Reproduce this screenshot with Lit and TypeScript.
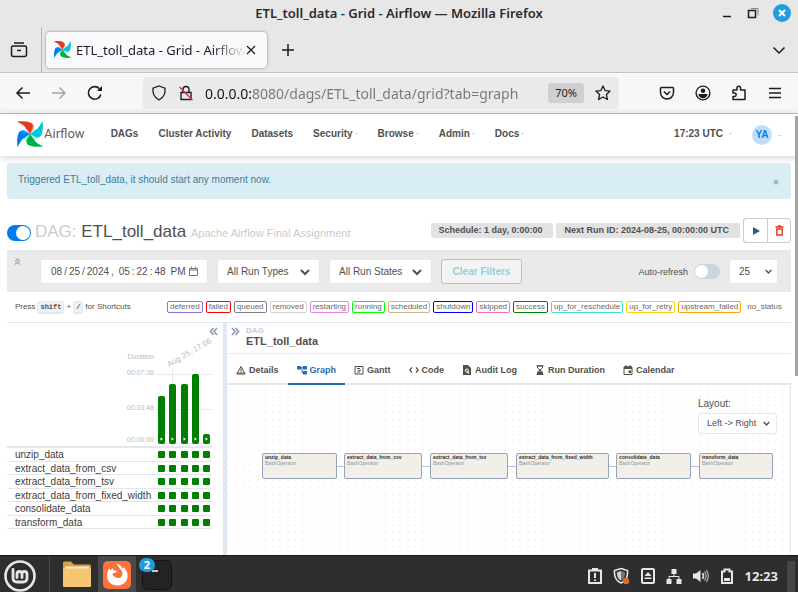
import { LitElement, html, css, svg, nothing } from "lit";
import { customElement } from "lit/decorators.js";

const base = css`
  * { box-sizing: border-box; }
  button { font: inherit; color: inherit; background: none; border: 0; padding: 0; margin: 0; display: flex; align-items: center; justify-content: center; }
  a { color: inherit; text-decoration: none; }
  svg { display: block; flex: none; fill: none; stroke: currentColor; }
  svg.solid { fill: currentColor; stroke: none; }
  input, select { font: inherit; color: inherit; margin: 0; }
`;

const blades: [number, string, string][] = [[0, "#e43921", "#ff7557"], [90, "#00c7d4", "#11e1ee"], [180, "#00ad46", "#04d659"], [270, "#017cee", "#0cb6ff"]];
const pinwheel = (size: number) => html`<svg class="solid" width=${size} height=${size} viewBox="0 0 26 26" aria-hidden="true">
  ${blades.map(([a, dark, light]) => svg`<g transform="rotate(${a} 13 13)">
    <path fill=${light} d="M13 13L8 7l6-5.500c3 1.800 3.500 4.500 2.500 6.500z" />
    <path fill=${dark} d="M.3.500C6-.3 12 .2 14.500 2.200c1.800 1.600 1 4-1.500 10.800C10.500 7 6 3.500.6 1z" />
  </g>`)}
</svg>`;

const chevron = (size = 10) => html`<svg width=${size} height=${size} viewBox="0 0 10 10" stroke-width="2" aria-hidden="true"><path d="M1 3l4 4 4-4" /></svg>`;

@customElement("browser-chrome")
class BrowserChrome extends LitElement {
  static styles = [base, css`
    :host { display: block; flex: none; font: 14px/20px "Noto Sans", sans-serif; color: #1c1b22; background: #e7e7e7; }
    .title { display: grid; grid-template-columns: 1fr auto 1fr; align-items: center; height: 25px; }
    .title h1 { grid-column: 2; margin: 0; font-size: 13px; font-weight: 600; color: #2b2b2b; }
    .wm { display: flex; justify-content: flex-end; align-items: center; gap: 14px; padding-right: 7px; }
    .close { width: 18px; height: 18px; border-radius: 50%; background: #1f9ede; color: #fff; }
    .tabs { display: flex; align-items: center; height: 48px; padding-top: 2px; border-bottom: 1px solid #c4c4c4; }
    .view { width: 42px; height: 44px; border-right: 1px solid #b4b4b4; padding-right: 3px; }
    .tab { display: flex; align-items: center; width: 221px; height: 36px; margin-left: 4px; padding: 0 11px 0 8px; background: #f9f9fb; border-radius: 4px; box-shadow: 0 0 3px rgba(0, 0, 0, .4); font-size: 13px; }
    .name { flex: 1; margin-left: 5px; overflow: hidden; white-space: nowrap; -webkit-mask-image: linear-gradient(90deg, #000 80%, transparent); mask-image: linear-gradient(90deg, #000 80%, transparent); }
    .plus { margin-left: 14px; }
    .all { margin-left: auto; padding-right: 12px; }
    .bar { display: flex; align-items: center; height: 41px; padding: 0 15px; background: #f7f7f8; border-bottom: 1px solid #c4c4c4; }
    .nav { display: flex; gap: 20px; padding-right: 40px; }
    .url { flex: 1; display: flex; align-items: center; gap: 11px; min-width: 0; height: 32px; padding: 0 8px; border-radius: 4px; background: #eaeaea; }
    .url input { flex: 1; min-width: 0; border: 0; padding: 0; outline: 0; height: 24px; color: transparent; background: linear-gradient(90deg, #15141a 46px, #77767c 46px); -webkit-background-clip: text; background-clip: text; }
    .zoom { width: 36px; height: 20px; border-radius: 3px; background: #d0d0d2; font-size: 11px; }
    .tools { display: flex; gap: 20px; padding-left: 40px; }
    .dim { color: #a5a5a9; }
  `];
  render() {
    return html`
      <div class="title">
        <h1>ETL_toll_data - Grid - Airflow — Mozilla Firefox</h1>
        <div class="wm">
          <button aria-label="Minimize"><svg width="12" height="12" stroke-width="1.500"><path d="M2 9.500h8" /></svg></button>
          <button aria-label="Restore"><svg width="12" height="12"><path d="M1.500 3.500h7v7h-7z" stroke-width="1.500" /><path d="M4 1.500h7v7" stroke="#888" /></svg></button>
          <button class="close" aria-label="Close"><svg width="8" height="8" stroke-width="2"><path d="M1 1l6 6M7 1L1 7" /></svg></button>
        </div>
      </div>
      <div class="tabs">
        <button class="view" aria-label="Firefox View"><svg width="18" height="18" stroke-width="1.500"><path d="M4 2h10M3 5h12q1.500 0 1.500 1.500v7q0 2-2 2h-11q-2 0-2-2v-7Q1.500 5 3 5M7 9.500h4" /></svg></button>
        <div class="tab">${pinwheel(17)}<span class="name">ETL_toll_data - Grid - Airflow</span>
          <button aria-label="Close tab"><svg width="10" height="10" stroke-width="1.200"><path d="M1 1l8 8M9 1L1 9" /></svg></button></div>
        <button class="plus" aria-label="New tab"><svg width="14" height="14" stroke-width="1.500"><path d="M7 1v12M1 7h12" /></svg></button>
        <button class="all" aria-label="List all tabs"><svg width="14" height="14" stroke-width="1.500"><path d="M1.500 4.500L7 10l5.500-5.500" /></svg></button>
      </div>
      <div class="bar">
        <div class="nav">
          <button aria-label="Back"><svg width="16" height="16" stroke-width="1.500"><path d="M15 8H2M7.500 2.500L2 8l5.500 5.500" /></svg></button>
          <button class="dim" aria-label="Forward"><svg width="16" height="16" stroke-width="1.500"><path d="M1 8h13M8.500 2.500L14 8l-5.500 5.500" /></svg></button>
          <button aria-label="Reload"><svg width="16" height="16" stroke-width="1.600"><path d="M13.800 9.500A6.300 6.300 0 1 1 12.500 3.800" /><path d="M15 1v5h-5z" fill="currentColor" stroke="none" /></svg></button>
        </div>
        <div class="url">
          <svg width="16" height="16" stroke-width="1.300"><path d="M8 1l6 2.200c.6 5-1.500 9.500-6 11.800C3.500 12.700 1.400 8.200 2 3.200z" /></svg>
          <svg width="16" height="16" stroke-width="1.400"><path d="M3 7.500h10v7H3zM5 7V4.500a3 3 0 0 1 6 0V7" /><path d="M1.500 2l13 13" stroke="#e22850" /></svg>
          <input aria-label="Address" value="0.0.0.0:8080/dags/ETL_toll_data/grid?tab=graph" />
          <button class="zoom">70%</button>
          <button aria-label="Bookmark"><svg width="16" height="16" stroke-width="1.300"><path stroke-linejoin="round" d="M8 1l2.100 4.600 5 .5-3.700 3.400 1 5L8 12l-4.400 2.500 1-5L.9 6.100l5-.5z" /></svg></button>
        </div>
        <div class="tools">
          <button aria-label="Pocket"><svg width="16" height="16" stroke-width="1.500"><path d="M2.500 2.500h11q1 0 1 1V7.500a6.500 6.500 0 0 1-13 0v-4q0-1 1-1zM4.800 6.500L8 9.500l3.200-3" /></svg></button>
          <button aria-label="Account"><svg width="16" height="16"><circle cx="8" cy="8" r="6.900" stroke-width="1.400" /><circle cx="8" cy="5.800" r="2.300" fill="currentColor" stroke="none" /><path d="M3.500 9h9a4.500 4.300 0 0 1-9 0z" fill="currentColor" stroke="none" /></svg></button>
          <button aria-label="Extensions"><svg width="16" height="16" stroke-width="1.500"><path stroke-linejoin="round" d="M2 5h4V3a1.800 1.800 0 0 1 3.600 0v2H14v9.500H2V11.500h1.500a1.700 1.700 0 0 0 0-3.400H2z" /></svg></button>
          <button aria-label="Menu"><svg width="16" height="16" stroke-width="1.500"><path d="M2 3.500h12M2 8h12M2 12.500h12" /></svg></button>
        </div>
      </div>`;
  }
}

const menus: [string, boolean][] = [["DAGs", false], ["Cluster Activity", false], ["Datasets", false], ["Security", true], ["Browse", true], ["Admin", true], ["Docs", true]];
const states: [string, string][] = [
  ["deferred", "mediumpurple"], ["failed", "red"], ["queued", "gray"], ["removed", "lightgrey"], ["restarting", "violet"], ["running", "lime"], ["scheduled", "tan"],
  ["shutdown", "blue"], ["skipped", "hotpink"], ["success", "green"], ["up_for_reschedule", "turquoise"], ["up_for_retry", "gold"], ["upstream_failed", "orange"], ["no_status", "transparent"],
];

@customElement("airflow-header")
class AirflowHeader extends LitElement {
  static styles = [base, css`
    :host { display: block; color: #51504f; }
    .nav { display: flex; align-items: center; height: 42px; padding: 0 17px; gap: 20px; font-weight: 700; box-shadow: 0 1px 8px rgba(0, 0, 0, .2); }
    .brand { display: flex; align-items: center; gap: 1px; margin-right: 6px; padding-bottom: 2px; font: 13px/16px Roboto, sans-serif; color: #63615f; }
    .menu { display: flex; align-items: center; gap: 2px; padding-bottom: 3px; }
    .caret { width: 3px; height: 1px; background: #d8ccd8; }
    .clock { margin-left: auto; gap: 6px; }
    .user { display: flex; align-items: center; gap: 6px; }
    .avatar { width: 20px; height: 20px; border-radius: 50%; background: #bfdefb; color: #017cee; line-height: 20px; text-align: center; }
    .alert { display: flex; align-items: center; justify-content: space-between; height: 36px; margin: 7px 7px 0; padding: 0 12px 2px 11px; border-radius: 3px; background: #d9edf5; color: #3f7d9b; }
    .dismiss { color: #93b9ca; padding-top: 4px; }
    .head { display: flex; align-items: center; gap: 3px; height: 51px; margin: 0 7px; padding-top: 12px; }
    .switch { appearance: none; position: relative; width: 24px; height: 16px; border-radius: 8px; background: #017cee; }
    .switch::after { content: ""; position: absolute; top: 1px; right: 1px; width: 14px; height: 14px; border-radius: 50%; background: #fff; }
    .head .switch { margin: 4px 1px 0 0; }
    h2 { flex: 1; margin: 0; padding-top: 3px; font-size: 17px; line-height: 20px; font-weight: 400; white-space: nowrap; color: #51504f; }
    h2 .pre, h2 small { color: #cbcbcb; }
    h2 small { font-size: 11px; }
    .tag { padding: 0 11px 0 8px; font-size: 9px; line-height: 15px; border-radius: 2px; background: #e2e2e2; font-weight: 700; white-space: nowrap; }
    .acts { display: flex; height: 25px; }
    .acts button { width: 24px; border: 1px solid #ccc; }
    .acts .run { border-radius: 3px 0 0 3px; color: #2a5b8f; border-right: 0; }
    .acts .del { border-radius: 0 3px 3px 0; color: #e43921; }
    .filters { display: flex; align-items: center; gap: 9px; height: 42px; margin: 0 7px; padding: 0 13px 0 7px; border-top: 1px solid #e2e8f0; background: #eaeaea; }
    .fold { align-self: flex-start; margin: 7px 10px 0 0; color: #a0aec0; }
    .box { display: grid; align-items: center; height: 25px; border: 1px solid #e2e8f0; border-radius: 3px; background: #fff; }
    .box > * { grid-area: 1 / 1; }
    .box svg { justify-self: end; margin-right: 9px; pointer-events: none; }
    .box select, .box input { appearance: none; width: 100%; border: 0; outline: 0; padding: 0 9px; background: none; }
    .date { width: 168px; }
    .date svg { margin-right: 8px; color: #777; }
    .date input { padding: 0 0 0 9px; }
    .date input::-webkit-calendar-picker-indicator { display: none; }
    .date input::-webkit-datetime-edit { padding: 0; }
    .date input::-webkit-datetime-edit-text { padding: 0 1px; }
    .date input::-webkit-datetime-edit-ampm-field { padding: 0; }
    .mid { width: 103px; }
    .num { width: 49px; }
    .num svg { margin-right: 5px; }
    .clear { width: 81px; height: 25px; border: 1px solid #8fd0dd; border-radius: 3px; background: #f3f3f3; color: #8fd0dd; font-weight: 700; }
    .auto { display: flex; align-items: center; gap: 6px; margin-left: auto; font-size: 9px; }
    .auto .switch { width: 26px; height: 15px; background: #cbd5e0; }
    .auto .switch::after { right: auto; left: 1px; width: 13px; height: 13px; }
    .legend { display: flex; align-items: center; height: 30px; padding: 0 13px 0 15px; font-size: 8px; line-height: 10px; white-space: nowrap; }
    .keys { display: flex; align-items: center; gap: 2px; margin-right: auto; }
    kbd { padding: 0 2px; border: 1px solid #e2e8f0; border-bottom-width: 2px; border-radius: 3px; background: #edf2f7; font: 700 7px/10px "Liberation Mono", monospace; }
    .states { display: flex; gap: 3px; margin: 0; padding: 0; list-style: none; }
    .states li { padding: 0 2px; border: 1px solid; border-radius: 2px; }
    .states span { color: #6a6968; }
  `];
  render() {
    return html`
      <nav class="nav">
        <a class="brand" href="#">${pinwheel(26)}Airflow</a>
        ${menus.map(([m, c]) => html`<a class="menu" href="#">${m}${c ? html`<i class="caret"></i>` : nothing}</a>`)}
        <a class="menu clock" href="#">17:23 UTC <i class="caret"></i></a>
        <a class="user" href="#"><span class="avatar">YA</span><i class="caret"></i></a>
      </nav>
      <div class="alert" role="alert">Triggered ETL_toll_data, it should start any moment now.
        <button class="dismiss" aria-label="Dismiss"><svg width="6" height="6" stroke-width="2"><path d="M1 1l4 4M5 1L1 5" /></svg></button></div>
      <div class="head">
        <input class="switch" type="checkbox" checked aria-label="Pause or unpause DAG" />
        <h2><span class="pre">DAG:</span> ETL_toll_data <small>Apache Airflow Final Assignment</small></h2>
        <span class="tag">Schedule: 1 day, 0:00:00</span>
        <span class="tag">Next Run ID: 2024-08-25, 00:00:00 UTC</span>
        <div class="acts">
          <button class="run" aria-label="Trigger DAG"><svg class="solid" width="8" height="8"><path d="M1 0l7 4-7 4z" /></svg></button>
          <button class="del" aria-label="Delete DAG"><svg width="9" height="11" stroke-width="1.400"><path d="M.5 2h8M3 1h3M1.800 4h5.400v6H1.800z" /></svg></button>
        </div>
      </div>
      <form class="filters">
        <button class="fold" type="button" aria-label="Collapse header"><svg width="7" height="7" stroke-width="1.300"><path d="M1 3.500l2.500-2.500L6 3.500M1 6.500L3.500 4 6 6.500" /></svg></button>
        <label class="box date"><input aria-label="Run date" type="datetime-local" step="1" value="2024-08-25T17:22:48" /><svg width="11" height="11"><path d="M1.500 2.500h8v7h-8zM1.500 4h8M3.500 .5v2M7.500 .5v2" /></svg></label>
        <label class="box mid"><select aria-label="Run type"><option>All Run Types</option></select>${chevron()}</label>
        <label class="box mid"><select aria-label="Run state"><option>All Run States</option></select>${chevron()}</label>
        <button class="clear" type="button">Clear Filters</button>
        <label class="auto">Auto-refresh <input class="switch" type="checkbox" /></label>
        <label class="box num"><select aria-label="Number of runs"><option>25</option></select>${chevron(7)}</label>
      </form>
      <div class="legend">
        <div class="keys">Press <kbd>shift</kbd> + <kbd>/</kbd> for Shortcuts</div>
        <ul class="states">${states.map(([n, c]) => html`<li style="border-color:${c}"><span>${n}</span></li>`)}</ul>
      </div>`;
  }
}

const runs = [48, 60, 60, 70, 10];
const tasks = ["unzip_data", "extract_data_from_csv", "extract_data_from_tsv", "extract_data_from_fixed_width", "consolidate_data", "transform_data"];

@customElement("run-grid")
class RunGrid extends LitElement {
  static styles = [base, css`
    :host { display: block; flex: none; width: 216px; }
    .fold { margin: 4px 5px 0 auto; color: #8fa0b8; }
    .chart { display: grid; grid-template-columns: 147px 56px; column-gap: 2px; height: 110px; font-size: 7px; line-height: 8px; color: #b3bccb; }
    .axis { display: flex; flex-direction: column; align-items: flex-end; padding-top: 17px; }
    .axis span:nth-child(2) { margin-top: 8px; }
    .axis span:nth-child(3) { margin-top: 27px; }
    .axis span:nth-child(4) { margin-top: 24px; }
    .plot { position: relative; display: flex; justify-content: space-between; align-items: flex-end; padding: 0 2px 2px;
      background: linear-gradient(#e8ebf0, #e8ebf0) 0 38px / 100% 1px no-repeat, linear-gradient(#e8ebf0, #e8ebf0) 0 73px / 100% 1px no-repeat, linear-gradient(#e8ebf0, #e8ebf0) 0 107px / 100% 1px no-repeat, linear-gradient(#e2e8f0, #e2e8f0) 16px 32px / 1px 20px no-repeat; }
    .when { position: absolute; left: 14px; top: 25px; font-size: 8px; white-space: nowrap; transform: rotate(-30deg); transform-origin: 0 100%; }
    .run { width: 7px; border-radius: 2px; background: green; color: #fff; align-items: flex-end; padding-bottom: 3px; }
    table { width: 205px; border-collapse: separate; border-spacing: 0; border-top: 2px solid #e2e8f0; color: #3d3d3d; }
    th, td { padding: 0; height: 14px; border-bottom: 1px solid #dfe6ef; line-height: 11px; }
    tr:nth-child(even) > * { height: 13px; }
    th { width: 151px; padding-left: 8px; text-align: left; font-weight: 400; white-space: nowrap; }
    .cells { display: flex; justify-content: space-between; width: 52px; }
    .cells button { width: 7px; height: 7px; border-radius: 1px; background: green; }
  `];
  render() {
    return html`
      <button class="fold" aria-label="Collapse details"><svg width="9" height="9" stroke-width="1.800"><path d="M4.500 1L1.500 4.500l3 3.500M8 1L5 4.500 8 8" /></svg></button>
      <div class="chart">
        <div class="axis"><span>Duration</span><span>00:07:36</span><span>00:03:48</span><span>00:00:00</span></div>
        <div class="plot"><span class="when">Aug 25, 17:06</span>
          ${runs.map((h, i) => html`<button class="run" style="height:${h}px" aria-label="Run ${i + 1}"><svg class="solid" width="3" height="4"><path d="M.5.500L3 2 .5 3.500z" /></svg></button>`)}
        </div>
      </div>
      <table>
        <tbody>${tasks.map((t) => html`<tr><th scope="row">${t}</th><td><div class="cells">${runs.map(() => html`<button aria-label="success"></button>`)}</div></td></tr>`)}</tbody>
      </table>`;
  }
}

const tabs: [string, unknown][] = [
  ["Details", svg`<path d="M5 1.500L9.200 9H.8zM5 3.500v3M5 7.300v1M2 8h6" />`],
  ["Graph", svg`<path fill="currentColor" stroke="none" d="M0 1h4v3.500H0zM6 1h4v3.500H6zM6 6h4v3.500H6z" /><path d="M4 2.700h2M5 2.700v5h1" />`],
  ["Gantt", svg`<path d="M1 1.500h8v7.500H1zM3 3.500h3M4 5.300h3M3 7h3" />`],
  ["Code", svg`<path stroke-width="1.200" d="M3 2.500L.8 5 3 7.500M7 2.500L9.200 5 7 7.500" />`],
  ["Audit Log", svg`<path fill="currentColor" stroke="none" fill-rule="evenodd" d="M1 0h5l3 3v7H1zM5 3.500a2 2 0 1 0 .1 4l1.400 1.300.8-.8L6.500 6.600A2 2 0 0 0 5 3.500zM5 4.500a1 1 0 1 1 0 2 1 1 0 0 1 0-2z" />`],
  ["Run Duration", svg`<path d="M2.500 1h5v2L5 5 2.500 3zM2.500 9V7L5 5l2.500 2v2z" /><path fill="currentColor" stroke="none" d="M2 10V7.500L5 6l3 1.500V10z" /><path d="M1.500 .7h7M1.500 9.500h7" />`],
  ["Calendar", svg`<path d="M1 2h8v7.500H1z" /><path fill="currentColor" stroke="none" d="M1 1.500h8V4H1zM2.500 0h1v2h-1zM6.500 0h1v2h-1zM5.500 5.500H8V8H5.500z" />`],
];
const nodes: [string, number, number][] = [
  ["unzip_data", 35, 75], ["extract_data_from_csv", 117, 78], ["extract_data_from_tsv", 203, 78],
  ["extract_data_from_fixed_width", 289, 93], ["consolidate_data", 389, 75], ["transform_data", 472, 74],
];

@customElement("dag-detail")
class DagDetail extends LitElement {
  static styles = [base, css`
    :host { display: flex; flex-direction: column; flex: 1; min-width: 0; border-left: 4px solid #e2e8f0; }
    .head { display: flex; gap: 6px; height: 31px; padding: 3px 4px 0; border-bottom: 1px solid #e8ebf0; }
    .fold { align-self: flex-start; padding-top: 1px; color: #8fa0b8; }
    .crumb { display: flex; flex-direction: column; font-size: 11px; line-height: 11px; font-weight: 700; }
    .crumb span { font-size: 8px; line-height: 10px; color: #c5cedb; }
    .tabs { display: flex; height: 31px; border-bottom: 2px solid #e2e8f0; font-size: 9px; font-weight: 700; white-space: nowrap; }
    .tabs button { gap: 3px; height: 31px; padding: 2px 9px 0; border-bottom: 2px solid transparent; }
    .tabs .on { color: #2b6cb0; border-color: #2b6cb0; }
    .canvas { --dot: #f5f5f8 1px, transparent 1px; position: relative; flex: 1; border-right: 1px solid #e2e8f0;
      background-image: radial-gradient(circle at 8px 5px, var(--dot)), radial-gradient(circle at 1px 5px, var(--dot)), radial-gradient(circle at 8px 12px, var(--dot)), radial-gradient(circle at 1px 12px, var(--dot));
      background-size: 15px 15px; }
    .layout { display: flex; flex-direction: column; gap: 2px; width: 79px; margin: 12px 13px 0 auto; }
    .box { display: grid; align-items: center; height: 21px; border: 1px solid #e2e8f0; border-radius: 3px; background: #fff; font-size: 9px; }
    .box > * { grid-area: 1 / 1; }
    .box select { appearance: none; border: 0; outline: 0; padding: 0 8px 2px; background: none; }
    .box svg { justify-self: end; margin-right: 6px; pointer-events: none; }
    .edge { position: absolute; top: 81px; left: 39px; width: 500px; height: 1px; background: #b8c4d6; }
    .node { position: absolute; top: 68px; height: 26px; padding: 0 2px; border: 1px solid #94a3ba; border-radius: 2px; background: #f2efe9; font-size: 5px; line-height: 7px; white-space: nowrap; color: #8c96a3; }
    .node b { display: block; line-height: 6px; color: #2d2d2d; }
  `];
  render() {
    return html`
      <div class="head">
        <button class="fold" aria-label="Collapse grid"><svg width="9" height="9" stroke-width="1.800"><path d="M1 1l3 3.500L1 8M4.500 1l3 3.500-3 3.500" /></svg></button>
        <div class="crumb"><span>DAG</span>ETL_toll_data</div>
      </div>
      <div class="tabs" role="tablist">
        ${tabs.map(([n, icon]) => html`<button role="tab" class=${n === "Graph" ? "on" : ""}><svg width="10" height="10">${icon}</svg>${n}</button>`)}
      </div>
      <div class="canvas">
        <label class="layout">Layout:<span class="box"><select><option>Left -&gt; Right</option></select>${chevron(7)}</span></label>
        <div class="edge"></div>
        ${nodes.map(([n, x, w]) => html`<div class="node" style="left:${x}px;width:${w}px"><b>${n}</b>BashOperator</div>`)}
      </div>`;
  }
}

@customElement("task-bar")
class TaskBar extends LitElement {
  static styles = [base, css`
    :host { display: flex; align-items: center; flex: none; box-sizing: border-box; height: 37px; border-top: 1px solid #191919; background: #2e2e2e; color: #e6e6e6; font: 700 13px/18px "Noto Sans", sans-serif; }
    .mint { padding: 4px 0 0 4px; }
    .sep { width: 1px; height: 36px; margin: 0 13px; background: #484848; }
    .files { margin-right: 7px; }
    .fox { width: 38px; height: 36px; padding-top: 2px; background: #4a4a4a; }
    .term { position: relative; margin-left: 6px; padding-top: 2px; }
    .count { position: absolute; left: -3px; top: 0; width: 16px; height: 14px; border-radius: 8px; background: #1f9ede; color: #fff; font-size: 11px; line-height: 14px; text-align: center; }
    .tray { display: flex; align-items: center; gap: 10px; margin-left: auto; padding: 4px 9px 0 0; }
    .end { width: 8px; height: 31px; margin: 5px 3px 0 0; background: #464646; }
  `];
  render() {
    return html`
      <button class="mint" aria-label="Menu"><svg width="32" height="32"><circle cx="16" cy="16" r="14.500" stroke-width="2.600" /><path stroke-width="2.800" stroke-linecap="round" stroke-linejoin="round" d="M9 9.500v8.500q0 4 4 4h6q4 0 4-4v-4a2.500 2.500 0 0 0-5 0v3.500M18 14a2.500 2.500 0 0 0-5 0v3.500" /></svg></button>
      <span class="sep"></span>
      <button class="files" aria-label="Files"><svg class="solid" width="28" height="28"><path fill="#d9a13f" d="M0 3q0-1.500 1.500-1.500H8l3 3h15.500q1.500 0 1.500 1.500v4H0z" /><path fill="#f5e9d4" d="M2 6.500h24v4H2z" /><path fill="#f5c574" d="M0 8.500h28V26q0 1-1 1H1q-1 0-1-1z" /></svg></button>
      <button class="fox" aria-label="Firefox"><svg class="solid" width="28" height="28"><rect width="28" height="28" rx="5" fill="#ff7139" /><path fill="#fff" d="M13.500 2.500c4 1 5 3 5.500 5 .8 0 1.200-.8 1.200-1.600 3.500 3 5 6.500 4.300 10.500-1 5-5.300 8.100-10.300 8.100C8.500 24.500 4 20.500 4 15c0-3.500 1.200-5.500 2-7.500l1.800 1.800 2-2.300.7 2.200 3.500.5c0 1.500-2.700 2-3 3.300-.2 2 1.500 4 4 4 2.700 0 4.700-2 4.500-5C19.300 9 16 7.500 13.500 2.500z" /><path fill="#ff7139" d="M9.500 12c2 1 4-1 6 .5-1.500 0-2.500 1.500-2 3-2 .8-4.300-1-4-3.500z" /></svg></button>
      <button class="term" aria-label="Terminal"><svg width="30" height="30"><rect x=".5" y=".5" width="29" height="29" rx="5" fill="#232323" stroke="#141414" /><path d="M10 11h6M6 9.500l1.500 1" stroke="#fff" stroke-width="1.500" /></svg><span class="count">2</span></button>
      <div class="tray">
        <svg width="16" height="18" stroke-width="2"><path d="M2 3.500h12V16H2z" /><path d="M5 2h6M8 6v5M8 12.500v1.500" /></svg>
        <svg width="17" height="18"><path d="M8 1.500l6.500 2c.5 6-1.500 10.500-6.500 12.500C3 14 1 9.500 1.500 3.500z" stroke-width="1.600" /><path d="M8 4l4 1.200c.2 4-1 6.800-4 8.300z" fill="#777" stroke="none" /><path d="M8 4L4 5.200c-.2 4 1 6.800 4 8.300z" fill="#d0d0d0" stroke="none" /><circle cx="13" cy="14" r="3.200" fill="#e0693a" stroke="none" /></svg>
        <svg width="16" height="18"><rect x="2" y="2" width="12" height="14" rx="1" stroke-width="2" /><path d="M8 5l3.500 4h-7zM4.500 10.500h7V12h-7z" fill="currentColor" stroke="none" /></svg>
        <svg width="16" height="18"><path fill="currentColor" stroke="none" d="M5.500 2h5v5h-5zM.5 12h5v5h-5zM10.500 12h5v5h-5z" /><path d="M8 6v3.500M3 12V9.500h10V12" /></svg>
        <svg width="17" height="18"><path fill="currentColor" stroke="none" d="M1 6.500h3L8.500 3v12L4 11.500H1z" /><path stroke-width="1.500" d="M10.500 6q2 3 0 6" /><path stroke-width="1.500" stroke="#999" d="M12.500 4.500q3 4.500 0 9M14.500 3q3.500 6 0 12" /></svg>
        <svg width="16" height="18"><path stroke-width="2" d="M3 4.500h2.500V2.500h5v2H13V16H3z" /><path fill="currentColor" stroke="none" d="M5 11h6v3H5z" /></svg>
        <time>12:23</time>
      </div>
      <span class="end"></span>`;
  }
}

@customElement("app-root")
class AppRoot extends LitElement {
  static styles = css`
    :host { display: flex; flex-direction: column; height: 100vh; overflow: hidden; background: #fff; }
    .page { position: relative; flex: 1; min-height: 0; display: flex; flex-direction: column; font: 10px/14px "Liberation Sans", Arial, sans-serif; color: #51504f; }
    .split { flex: 1; display: flex; min-height: 0; margin: 0 7px; border-top: 1px solid #dfe6ef; }
    .thumb { position: absolute; right: 0; top: 2px; width: 3px; height: 59%; background: #a3a3a3; }
  `;
  render() {
    return html`
      <browser-chrome></browser-chrome>
      <main class="page">
        <airflow-header></airflow-header>
        <div class="split"><run-grid></run-grid><dag-detail></dag-detail></div>
        <div class="thumb"></div>
      </main>
      <task-bar></task-bar>`;
  }
}
